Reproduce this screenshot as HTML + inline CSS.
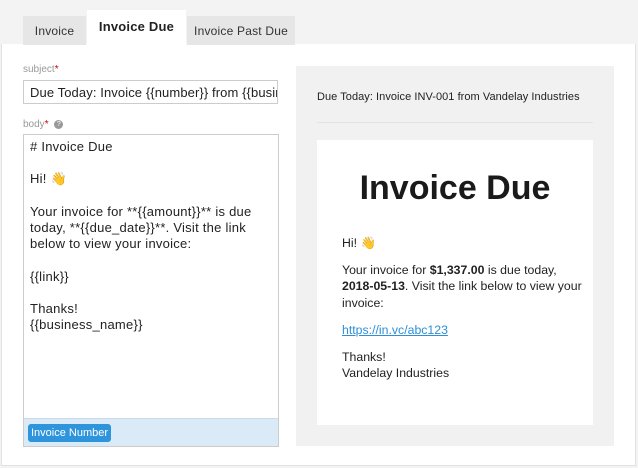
<!DOCTYPE html>
<html><head><meta charset="utf-8"><style>
*{box-sizing:border-box;margin:0;padding:0}
body{width:638px;height:468px;background:#f3f3f3;font-family:"Liberation Sans",sans-serif;position:relative;overflow:hidden}
.top{position:absolute;left:0;top:0;width:638px;height:45px;background:#f3f3f3}
.tab{position:absolute;top:16px;height:29px;background:#e6e6e6;font-size:12px;color:#333;text-align:center;line-height:30px;letter-spacing:0.2px}
.tab.act{top:10px;height:35px;background:#fff;font-weight:bold;font-size:13px;color:#222;line-height:34px}
.main{position:absolute;left:1px;top:44px;width:635px;height:422px;background:#fff;border:1px solid #e2e2e2;border-top:none}
.lbl{position:absolute;font-size:10px;color:#999}
.lbl b{color:#c00;font-weight:normal}
.inp{position:absolute;left:23px;top:80px;width:255px;height:24px;border:1px solid #ccc;font-size:13px;color:#222;padding:3px 6px;line-height:17px;white-space:nowrap;overflow:hidden;letter-spacing:0.1px}
.ta{position:absolute;left:23px;top:134px;width:256px;height:313px;border:1px solid #ccc}
.tat{padding:4px 6px;font-size:13px;line-height:16.2px;color:#222;letter-spacing:0.25px}
.foot{position:absolute;left:0;bottom:0;width:100%;height:28px;background:#dbeaf7;border-top:1px solid #c9dcec}
.btn{position:absolute;left:4px;top:5px;width:83px;height:18px;background:#2e95dc;color:#fff;font-size:11px;border-radius:3px;text-align:center;line-height:18px}
.prev{position:absolute;left:296px;top:66px;width:318px;height:380px;background:#f1f1f1}
.subj{position:absolute;left:21px;top:25px;font-size:11px;color:#222;letter-spacing:0.05px}
.hr{position:absolute;left:21px;top:56px;width:276px;height:1px;background:#e4e4e4}
.card{position:absolute;left:21px;top:74px;width:276px;height:285px;background:#fff}
.card h1{position:absolute;left:0;width:100%;top:29px;text-align:center;font-size:34px;font-weight:bold;color:#1a1a1a}
.ct{position:absolute;left:25px;top:95px;width:240px;font-size:12.3px;line-height:16.4px;color:#222}
.ct p{margin-bottom:10.5px}
a{color:#2e8fd6;text-decoration:underline}
</style></head><body>
<div class="top"></div>
<div class="main"></div>
<div class="tab" style="left:23px;width:63px">Invoice</div>
<div class="tab act" style="left:87px;width:99px">Invoice Due</div>
<div class="tab" style="left:187px;width:108px">Invoice Past Due</div>
<div class="lbl" style="left:23px;top:64px">subject<b>*</b></div>
<div class="inp">Due Today: Invoice {{number}} from {{business_name}}</div>
<div class="lbl" style="left:23px;top:119px">body<b>*</b> <span style="display:inline-block;width:9px;height:9px;border-radius:50%;background:#999;color:#fff;font-size:7px;text-align:center;line-height:9px;vertical-align:middle;margin-left:3px">?</span></div>
<div class="ta"><div class="tat"># Invoice Due<br><br>Hi! 👋<br><br>Your invoice for **{{amount}}** is due today, **{{due_date}}**. Visit the link<br>below to view your invoice:<br><br>{{link}}<br><br>Thanks!<br>{{business_name}}</div>
<div class="foot"><div class="btn">Invoice Number</div></div></div>
<div class="prev">
<div class="subj">Due Today: Invoice INV-001 from Vandelay Industries</div>
<div class="hr"></div>
<div class="card"><h1>Invoice Due</h1>
<div class="ct"><p>Hi! 👋</p><p>Your invoice for <b>$1,337.00</b> is due today, <b>2018-05-13</b>. Visit the link below to view your invoice:</p><p><a>https://in.vc/abc123</a></p><p>Thanks!<br>Vandelay Industries</p></div>
</div></div>
</body></html>
